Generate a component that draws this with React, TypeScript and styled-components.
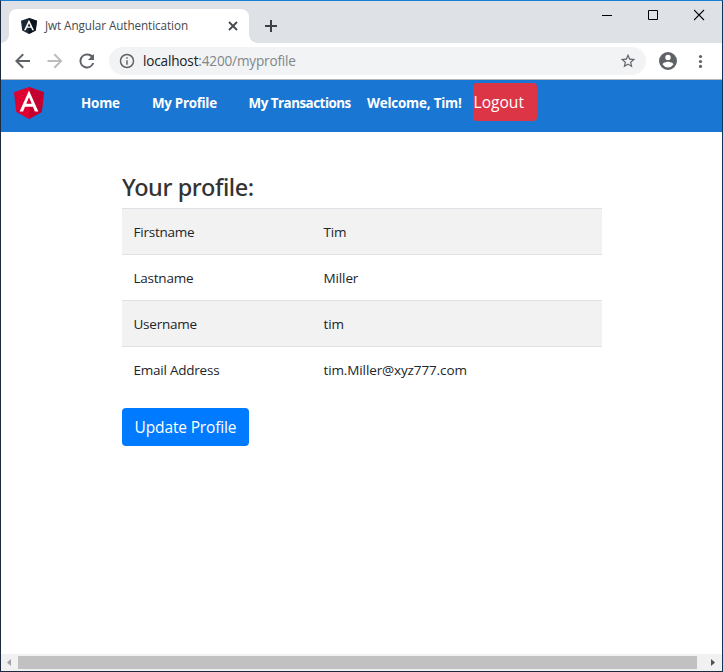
import React from 'react';
import styled, { createGlobalStyle } from 'styled-components';

const GlobalStyle = createGlobalStyle`
  *, *::before, *::after { box-sizing: border-box; }
  html, body { margin: 0; height: 100%; overflow: hidden; }
  body { background: #fff; color: #212529; font-family: "Open Sans", "Noto Sans", sans-serif; }
  svg { display: block; flex: none; }
  button { font-family: inherit; border: 0; padding: 0; background: none; }
`;

const Window = styled.div`
  width: 723px;
  height: 672px;
  display: flex;
  flex-direction: column;
  border: 1px solid #1b2a3d;
  border-top-color: #1a7fd0;
  border-right-color: #10355a;
`;

const TabStrip = styled.header`
  display: flex;
  height: 42px;
  flex: none;
  padding: 8px 0 0 8px;
  background: #dee1e6;
`;

const Tab = styled.div`
  position: relative;
  display: flex;
  align-items: center;
  width: 240px;
  height: 34px;
  padding: 0 11px 0 12px;
  background: #fff;
  border-radius: 8px 8px 0 0;

  &::before, &::after {
    content: "";
    position: absolute;
    bottom: 0;
    width: 8px;
    height: 8px;
  }
  &::before { left: -8px; background: radial-gradient(circle at 0 0, transparent 7.5px, #fff 8px); }
  &::after { right: -8px; background: radial-gradient(circle at 100% 0, transparent 7.5px, #fff 8px); }
`;

const TabTitle = styled.span`
  flex: 1;
  margin-left: 8px;
  padding-bottom: 2px;
  font-size: 11.7px;
  letter-spacing: -0.07px;
  line-height: 16px;
  color: #45494d;
  white-space: nowrap;
`;

const NewTab = styled.div`
  padding: 11px 0 0 16px;
`;

const WindowControls = styled.div`
  display: flex;
  gap: 35px;
  margin: 0 17px 0 auto;
`;

const Toolbar = styled.div`
  display: flex;
  align-items: center;
  height: 37px;
  flex: none;
  padding: 0 14px 0 14px;
  background: #fff;
  border-bottom: 1px solid #b4b6b8;
`;

const NavButtons = styled.div`
  display: flex;
  gap: 16px;
`;

const AddressBar = styled.div`
  display: flex;
  align-items: center;
  width: 537px;
  height: 28px;
  margin: 0 13px 0 14px;
  padding: 0 10px;
  border-radius: 14px;
  background: #f1f3f4;
`;

const Url = styled.span`
  flex: 1;
  margin-left: 8px;
  font-size: 13.6px;
  letter-spacing: -0.18px;
  line-height: 20px;
  color: #80868b;
`;

const Host = styled.span`
  color: #202124;
`;

const MenuSlot = styled.div`
  margin-left: auto;
`;

const Navbar = styled.nav`
  display: flex;
  height: 52px;
  flex: none;
  padding: 3px 0 0 13px;
  background: #1976d2;
`;

const Brand = styled.div`
  width: 67px;
  padding-top: 4px;
`;

const NavItem = styled.a<{ $width: number; $tracking?: number }>`
  width: ${(p) => p.$width}px;
  padding-top: 10px;
  font-size: 13.4px;
  font-weight: 700;
  line-height: 20px;
  letter-spacing: ${(p) => p.$tracking ?? -0.2}px;
  color: #fff;
  white-space: nowrap;
`;

const LogoutButton = styled.button`
  width: 64px;
  height: 38px;
  border-radius: 4px;
  background: #dc3545;
  color: #fff;
  font-size: 15.6px;
  line-height: 38px;
  text-align: left;
  text-indent: 0.5px;
`;

const Page = styled.main`
  flex: 1;
  padding: 41px 0 0 121px;
  background: #fff;
`;

const Heading = styled.h1`
  margin: 0 0 6px;
  height: 29px;
  color: #333;
  font-family: "Noto Sans", sans-serif;
  font-size: 23.5px;
  font-weight: 500;
  line-height: 29px;
  letter-spacing: -0.4px;
`;

const ProfileTable = styled.dl`
  width: 480px;
  margin: 0 0 16px;
`;

const Row = styled.div`
  display: grid;
  grid-template-columns: 190px 1fr;
  height: 46px;
  padding: 0 11.5px;
  border-top: 1px solid #dee2e6;
  line-height: 46px;
  font-size: 13.5px;

  &:nth-child(odd) { background: #f2f2f2; }
`;

const Label = styled.dt`
  letter-spacing: -0.23px;
`;

const Value = styled.dd`
  margin: 0;
  letter-spacing: -0.12px;
`;

const UpdateButton = styled.button`
  width: 127px;
  height: 38px;
  border-radius: 4px;
  background: #007bff;
  color: #fff;
  font-size: 15.5px;
  line-height: 38px;
  letter-spacing: -0.15px;
`;

const ScrollBar = styled.div`
  display: flex;
  align-items: center;
  height: 17px;
  flex: none;
  background: #f1f1f1;
`;

const Arrow = styled.div`
  flex: none;
  width: 17px;
  padding-left: 6px;
`;

const Thumb = styled.div`
  flex: none;
  width: 679px;
  height: 13px;
  margin-right: 8px;
  background: #c1c1c1;
`;

type ShieldProps = { width: number; height: number; base: string; shade: string };

const Shield = ({ width, height, base, shade }: ShieldProps) => (
  <svg width={width} height={height} viewBox="31.9 30 186.2 200" preserveAspectRatio="none">
    <path fill={base} d="M125 30L31.9 63.2l14.2 123.1L125 230l78.9-43.7 14.2-123.1z" />
    <path fill={shade} d="M125 30v200l78.9-43.7 14.2-123.1z" />
    <path fill="#fff" d="M125 52.1L66.8 182.6h21.7l11.7-29.2h49.4l11.7 29.2H183L125 52.1zm17 83.3h-34l17-40.9z" />
  </svg>
);

const profile = [
  ['Firstname', 'Tim'],
  ['Lastname', 'Miller'],
  ['Username', 'tim'],
  ['Email Address', 'tim.Miller@xyz777.com'],
];

export default function App() {
  return (
    <>
      <GlobalStyle />
      <Window>
        <TabStrip>
          <Tab>
            <Shield width={16} height={16} base="#1b2733" shade="#0b131b" />
            <TabTitle>Jwt Angular Authentication</TabTitle>
            <svg width="10" height="10" viewBox="0 0 10 10" stroke="#45494d" strokeWidth="1.8">
              <path d="M1 1l8 8M9 1l-8 8" />
            </svg>
          </Tab>
          <NewTab>
            <svg width="12" height="12" viewBox="0 0 12 12" stroke="#3c4043" strokeWidth="2">
              <path d="M6 0v12M0 6h12" />
            </svg>
          </NewTab>
          <WindowControls>
            <svg width="11" height="12" viewBox="0 0 11 12" fill="#000">
              <path d="M0 6h10v1H0z" />
            </svg>
            <svg width="11" height="12" viewBox="0 0 11 12" fill="none" stroke="#000">
              <path d="M.5 1.5h9v9h-9z" />
            </svg>
            <svg width="11" height="12" viewBox="0 0 11 12" stroke="#000" strokeWidth="1.1">
              <path d="M0 1l10 10M10 1l-10 10" />
            </svg>
          </WindowControls>
        </TabStrip>
        <Toolbar>
          <NavButtons>
            <svg width="16" height="16" viewBox="4 4 16 16" fill="#5f6368">
              <path d="M19 11H7.8l5.1-5.1L11.5 4.5 4 12l7.5 7.5 1.4-1.4L7.8 13H19z" />
            </svg>
            <svg width="16" height="16" viewBox="4 4 16 16" fill="#babcbe">
              <path d="M4.5 11h11.2l-5.1-5.1L12 4.5l7.5 7.5-7.5 7.5-1.4-1.4 5.1-5.1H4.5z" />
            </svg>
            <svg width="16" height="16" viewBox="4 4 16 16" fill="#5f6368">
              <path d="M17.65 6.35A7.96 7.96 0 0 0 12 4.5a7.5 7.5 0 1 0 7.2 9.5h-2.08A5.5 5.5 0 1 1 12 6.5c1.66 0 2.9.55 3.9 1.6L13 11h6V5z" />
            </svg>
          </NavButtons>
          <AddressBar>
            <svg width="16" height="16" viewBox="1 1 22 22" fill="#5f6368">
              <path d="M11 7h2v2h-2zm0 4h2v6h-2zm1-9a10 10 0 1 0 0 20 10 10 0 0 0 0-20zm0 18a8 8 0 1 1 0-16 8 8 0 0 1 0 16z" />
            </svg>
            <Url><Host>localhost</Host>:4200/myprofile</Url>
            <svg width="16" height="16" viewBox="1 1 22 22" fill="#5f6368">
              <path d="M22 9.24l-7.19-.62L12 2 9.19 8.63 2 9.24l5.46 4.73L5.82 21 12 17.27 18.18 21l-1.63-7.03zM12 15.4l-3.76 2.27 1-4.28-3.32-2.88 4.38-.38L12 6.1l1.71 4.04 4.38.38-3.32 2.88 1 4.28z" />
            </svg>
          </AddressBar>
          <svg width="18" height="18" viewBox="2 2 20 20" fill="#5f6368">
            <path d="M12 2a10 10 0 1 0 0 20 10 10 0 0 0 0-20zm0 3a3 3 0 1 1 0 6 3 3 0 0 1 0-6zm0 14.2a7.2 7.2 0 0 1-6-3.22c.03-1.99 4-3.08 6-3.08 1.99 0 5.97 1.09 6 3.08a7.2 7.2 0 0 1-6 3.22z" />
          </svg>
          <MenuSlot>
            <svg width="14" height="14" viewBox="0 0 14 14" fill="#5f6368">
              <circle cx="6.5" cy="2.5" r="1.6" />
              <circle cx="6.5" cy="7.5" r="1.6" />
              <circle cx="6.5" cy="12.4" r="1.6" />
            </svg>
          </MenuSlot>
        </Toolbar>
        <Navbar>
          <Brand>
            <Shield width={30} height={32} base="#dd0031" shade="#c3002f" />
          </Brand>
          <NavItem $width={71}>Home</NavItem>
          <NavItem $width={96.5} $tracking={-0.3}>My Profile</NavItem>
          <NavItem $width={118.5} $tracking={-0.5}>My Transactions</NavItem>
          <NavItem as="span" $width={106}>Welcome, Tim!</NavItem>
          <LogoutButton>Logout</LogoutButton>
        </Navbar>
        <Page>
          <Heading>Your profile:</Heading>
          <ProfileTable>
            {profile.map(([label, value]) => (
              <Row key={label}>
                <Label>{label}</Label>
                <Value>{value}</Value>
              </Row>
            ))}
          </ProfileTable>
          <UpdateButton>Update Profile</UpdateButton>
        </Page>
        <ScrollBar>
          <Arrow>
            <svg width="4" height="7" viewBox="0 0 4 7" fill="#a3a3a3"><path d="M4 0v7L0 3.5z" /></svg>
          </Arrow>
          <Thumb />
          <Arrow>
            <svg width="4" height="7" viewBox="0 0 4 7" fill="#505050"><path d="M0 0v7l4-3.5z" /></svg>
          </Arrow>
        </ScrollBar>
      </Window>
    </>
  );
}
